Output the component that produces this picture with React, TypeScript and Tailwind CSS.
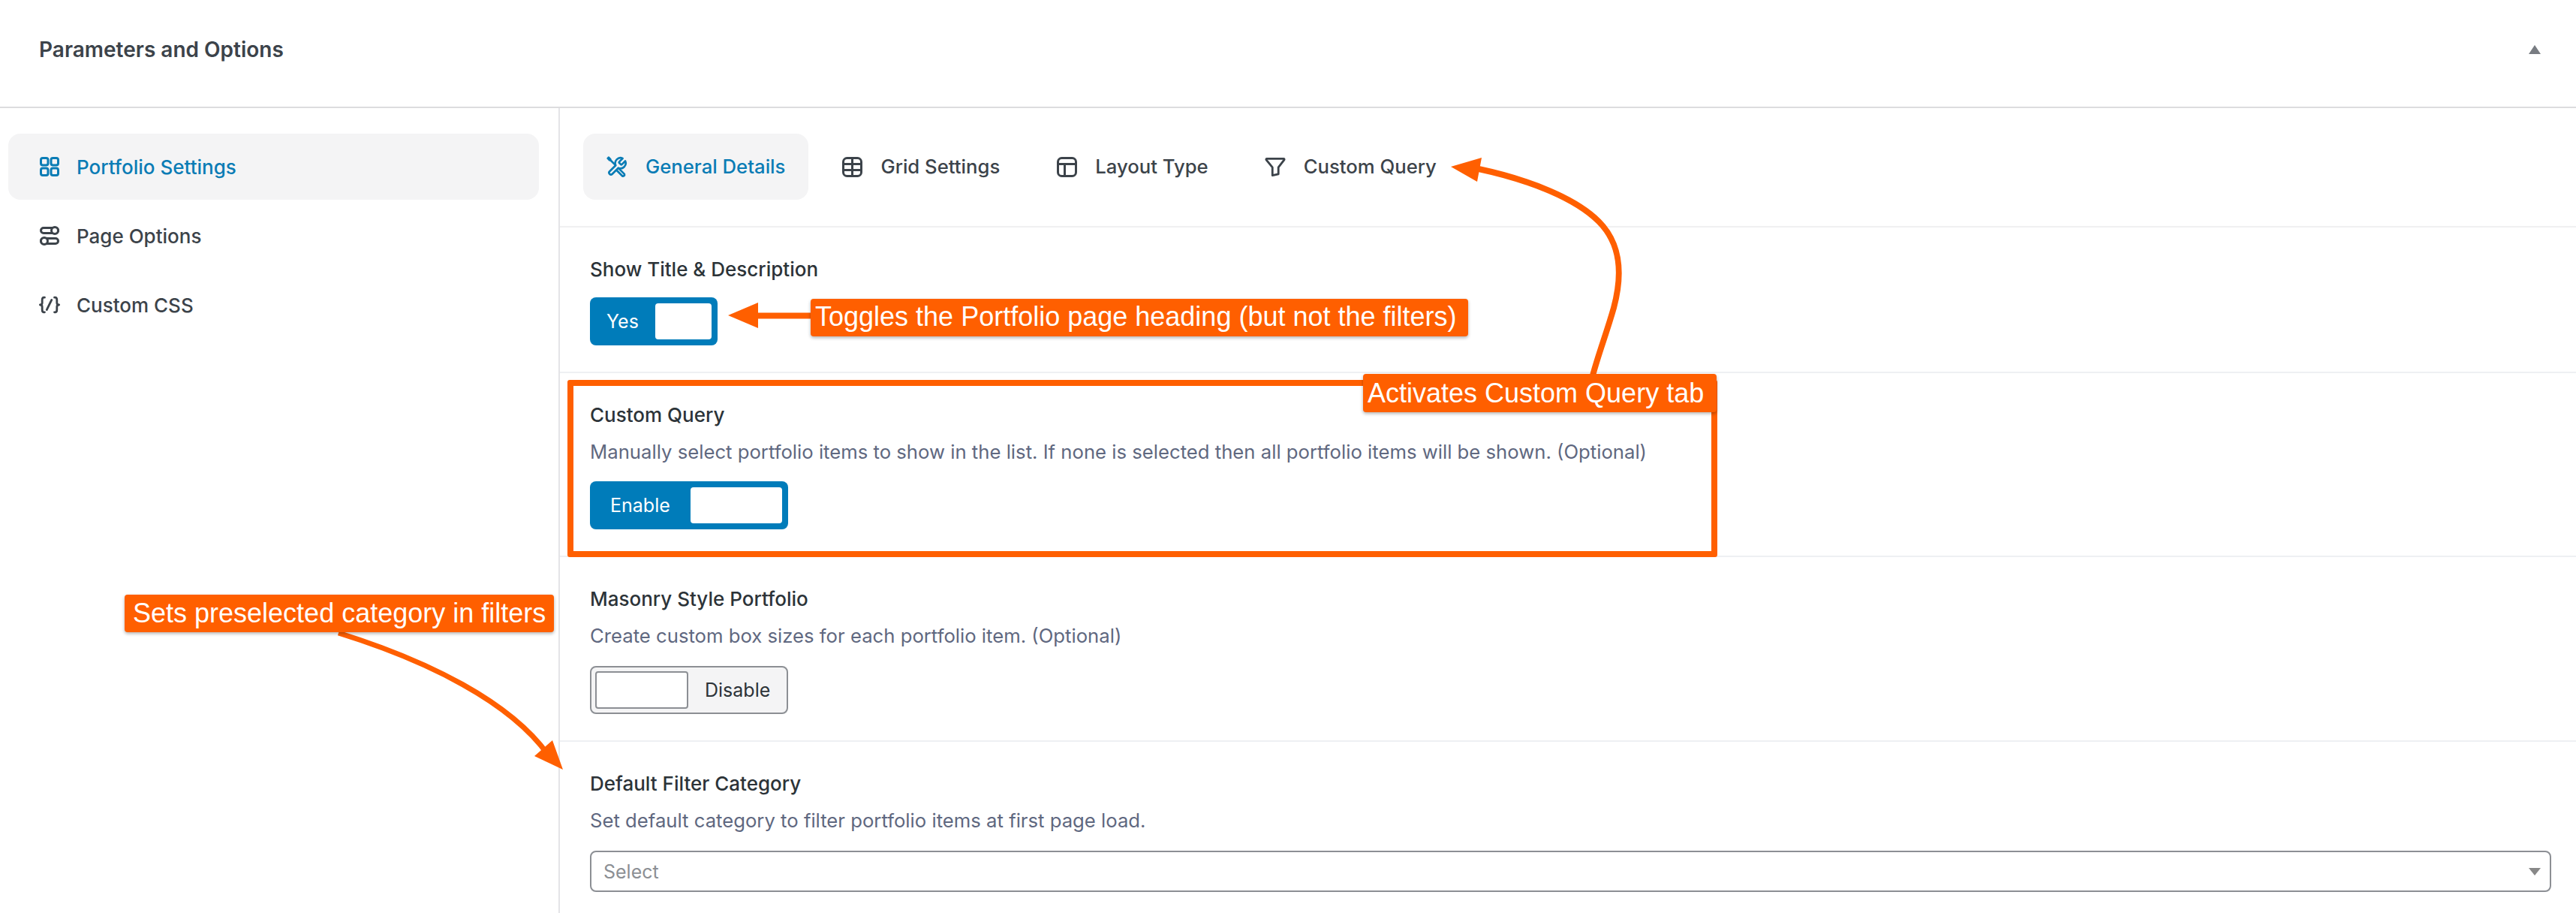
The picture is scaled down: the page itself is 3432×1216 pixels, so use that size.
import React from "react";

const Tools = () => (
  <svg width="30" height="30" viewBox="0 0 24 24" fill="none" stroke="currentColor" strokeWidth="2.300" strokeLinecap="round" strokeLinejoin="round">
    <path d="M14.700 6.300a1 1 0 0 0 0 1.400l1.600 1.600a1 1 0 0 0 1.400 0l3.770-3.770a6 6 0 0 1-7.940 7.940l-6.910 6.910a2.120 2.120 0 0 1-3-3l6.910-6.910a6 6 0 0 1 7.940-7.940l-3.760 3.760z" />
    <path d="M2.500 1.500L4.500 3.500L3.500 4.500L1.500 2.500Z" />
    <path d="M4.500 4.500l5.500 5.500" />
    <path d="M14.500 14.500l6 6a1.700 1.700 0 0 1-2.500 2l-6-6" />
  </svg>
);

const GridIcon = () => (
  <svg width="27" height="27" viewBox="0 0 27 27" fill="none" stroke="currentColor" strokeWidth="3">
    <rect x="1.500" y="1.500" width="24" height="24" rx="5" />
    <path d="M1.500 9.500H25.500M1.500 17.500H25.500M13.500 1.500V25.500" />
  </svg>
);

const LayoutIcon = () => (
  <svg width="27" height="27" viewBox="0 0 27 27" fill="none" stroke="currentColor" strokeWidth="3">
    <rect x="1.500" y="1.500" width="24" height="24" rx="5" />
    <path d="M1.500 9.500H25.500M10.500 9.500V25.500" />
  </svg>
);

const FunnelIcon = () => (
  <svg width="30" height="27" viewBox="0 0 30 27" fill="none" stroke="currentColor" strokeWidth="3" strokeLinejoin="round">
    <path d="M3 1.500H27a1 1 0 0 1 .8 1.600L19.500 14V23.500L11 25.500V14L2.200 3.100A1 1 0 0 1 3 1.500Z" />
  </svg>
);

const Squares = () => (
  <svg width="26" height="26" viewBox="0 0 26 26" fill="none" stroke="currentColor" strokeWidth="3">
    <rect x="1.500" y="1.500" width="9.500" height="9.500" rx="2.500" />
    <rect x="15" y="1.500" width="9.500" height="9.500" rx="2.500" />
    <rect x="1.500" y="15" width="9.500" height="9.500" rx="2.500" />
    <rect x="15" y="15" width="9.500" height="9.500" rx="2.500" />
  </svg>
);

const Toggles = () => (
  <svg width="26" height="26" viewBox="0 0 26 26" fill="none" stroke="currentColor" strokeWidth="3">
    <rect x="1.500" y="2.500" width="23" height="7" rx="3.500" />
    <circle cx="20" cy="6" r="4.500" fill="#fff" />
    <rect x="1.500" y="16.500" width="23" height="7" rx="3.500" />
    <circle cx="6" cy="20" r="4.500" fill="#fff" />
  </svg>
);

const CodeBraces = () => (
  <svg width="30" height="24" viewBox="0 0 30 24" fill="none" stroke="currentColor" strokeWidth="3" strokeLinecap="round" strokeLinejoin="round">
    <path d="M8 1.500H7C5 1.500 4.500 3 4.500 5V9C4.500 11 3.500 12 1.500 12C3.500 12 4.500 13 4.500 15V19C4.500 21 5 22.500 7 22.500H8" />
    <path d="M22 1.500H23C25 1.500 25.500 3 25.500 5V9C25.500 11 26.500 12 28.500 12C26.500 12 25.500 13 25.500 15V19C25.500 21 25 22.500 23 22.500H22" />
    <path d="M11 19L18 5" />
  </svg>
);

const tabs = [
  { label: "General Details", icon: <Tools />, active: true },
  { label: "Grid Settings", icon: <GridIcon /> },
  { label: "Layout Type", icon: <LayoutIcon /> },
  { label: "Custom Query", icon: <FunnelIcon /> },
];

const menu = [
  { label: "Portfolio Settings", icon: <Squares />, active: true },
  { label: "Page Options", icon: <Toggles /> },
  { label: "Custom CSS", icon: <CodeBraces /> },
];

const SwitchOn = ({ label, className }: { label: string; className: string }) => (
  <div className={`flex h-16 items-center justify-between rounded-[8px] bg-[#007cba] pr-2 ${className}`}>
    <span className="text-[25px] leading-none text-white">{label}</span>
    <span className="h-12 flex-none rounded-[4px] bg-white w-[var(--knob)]"></span>
  </div>
);

const App = () => {
  return (
    <div className="relative h-[1216px] w-[3432px] overflow-hidden bg-white font-['Inter',sans-serif] text-[#2c3338]">
      <div className="flex h-[144px] items-center justify-between border-b-2 border-[#dcdcde] pb-[10px] pl-[52px] pr-[47px]">
        <h2 className="text-[28px] font-semibold text-[#3c434a]">Parameters and Options</h2>
        <span className="h-0 w-0 border-x-8 border-b-[12px] border-x-transparent border-b-[#787c82]"></span>
      </div>

      <div className="flex h-[1072px]">
        <div className="flex w-[746px] shrink-0 flex-col gap-1 border-r-2 border-[#e4e4e7] pl-[11px] pr-[26px] pt-[34px]">
          {menu.map((m) => (
            <div
              key={m.label}
              className={`flex h-[88px] items-center gap-[22px] rounded-2xl pl-[41px] text-[26px] font-medium ${m.active ? "bg-[#f4f4f5] text-[#0a7cb5]" : "text-[#3c434a]"}`}
            >
              <span className="flex w-7 justify-center">{m.icon}</span>
              {m.label}
            </div>
          ))}
        </div>

        <div className="min-w-0 flex-1">
          <div className="flex h-[159px] gap-[13px] border-b-2 border-[#f0f0f1] pl-[31px] pt-[34px]">
            {tabs.map((t) => (
              <div
                key={t.label}
                className={`flex h-[88px] items-center gap-6 rounded-2xl px-[31px] text-[25.7px] font-medium ${t.active ? "bg-[#f4f4f5] text-[#0a7cb5]" : "text-[#3c434a]"}`}
              >
                <span className="flex w-7 justify-center">{t.icon}</span>
                {t.label}
              </div>
            ))}
          </div>

          <div className="h-[194px] border-b-2 border-[#eef0f3] px-10 pt-[41px]">
            <p className="text-[26px] font-medium leading-[30px]">Show Title &amp; Description</p>
            <SwitchOn label="Yes" className="mt-[22px] w-[170px] pl-[22px] [--knob:75px]" />
          </div>

          <div className="h-[245px] border-b-2 border-[#eef0f3] px-10 pt-[41px]">
            <p className="text-[26px] font-medium leading-[30px]">Custom Query</p>
            <p className="mt-4 text-[25.7px] leading-9 text-[#5f6880]">
              Manually select portfolio items to show in the list. If none is selected then all portfolio items will be shown. (Optional)
            </p>
            <SwitchOn label="Enable" className="mt-[21px] w-[264px] pl-[27px] [--knob:122px]" />
          </div>

          <div className="h-[246px] border-b-2 border-[#eef0f3] px-10 pt-[41px]">
            <p className="text-[26px] font-medium leading-[30px]">Masonry Style Portfolio</p>
            <p className="mt-4 text-[25.7px] leading-9 text-[#5f6880]">Create custom box sizes for each portfolio item. (Optional)</p>
            <div className="mt-[22px] flex h-16 w-[264px] items-center rounded-[8px] border-2 border-[#8c8f94] bg-[#f4f4f5] pl-[5px]">
              <span className="h-[50px] w-[124px] rounded-[4px] border-2 border-[#8c8f94] bg-white"></span>
              <span className="ml-[22px] text-[25px] leading-none text-[#2c3338]">Disable</span>
            </div>
          </div>

          <div className="pl-10 pr-[33px] pt-[41px]">
            <p className="text-[26px] font-medium leading-[30px]">Default Filter Category</p>
            <p className="mt-4 text-[25.7px] leading-9 text-[#5f6880]">Set default category to filter portfolio items at first page load.</p>
            <div className="mt-[22px] flex h-[55px] items-center justify-between rounded-[8px] border-2 border-[#8c8f94] pl-4 pr-[12px]">
              <span className="mt-[3px] text-[25px] text-[#8c8f94]">Select</span>
              <span className="h-0 w-0 border-x-8 border-t-[10px] border-x-transparent border-t-[#888888]"></span>
            </div>
          </div>
        </div>
      </div>

      {/* annotations drawn over the page */}
      <div className="absolute left-[756px] top-[506px] h-[236px] w-[1532px] rounded-[3px] border-8 border-[#ff5f00]"></div>

      <svg className="absolute left-0 top-0" width="3432" height="1216" fill="none">
        <path d="M1970 225C2040 240 2100 265 2130 295C2160 325 2162 365 2150 410C2140 445 2130 470 2122 500" stroke="#ff5f00" strokeWidth="8" />
        <path d="M1933 222L1974 210L1968 242Z" fill="#ff5f00" />
        <path d="M1005 420.500H1082" stroke="#ff5f00" strokeWidth="8" />
        <path d="M970 420L1010 403V437Z" fill="#ff5f00" />
        <path d="M451 843C570 880 680 935 730 1005" stroke="#ff5f00" strokeWidth="7" />
        <path d="M750 1025L736 986L712 1007Z" fill="#ff5f00" />
      </svg>

      <div className="absolute left-[1080px] top-[398px] flex h-[50px] w-[876px] items-center rounded-[4px] bg-[#ff5f00] pb-[2px] pl-[6px] font-['Liberation_Sans',sans-serif] text-[36px] text-white shadow-[0_2px_4px_rgba(0,0,0,0.3)]">
        Toggles the Portfolio page heading (but not the filters)
      </div>
      <div className="absolute left-[1816px] top-[498px] flex h-[51px] w-[471px] items-center rounded-[4px] bg-[#ff5f00] pl-[6px] font-['Liberation_Sans',sans-serif] text-[36px] text-white shadow-[0_2px_4px_rgba(0,0,0,0.3)]">
        Activates Custom Query tab
      </div>
      <div className="absolute left-[166px] top-[792px] flex h-[50px] w-[572px] items-center rounded-[4px] bg-[#ff5f00] pl-[11px] font-['Liberation_Sans',sans-serif] text-[36px] text-white shadow-[0_2px_4px_rgba(0,0,0,0.3)]">
        Sets preselected category in filters
      </div>
    </div>
  );
};

export default App;
